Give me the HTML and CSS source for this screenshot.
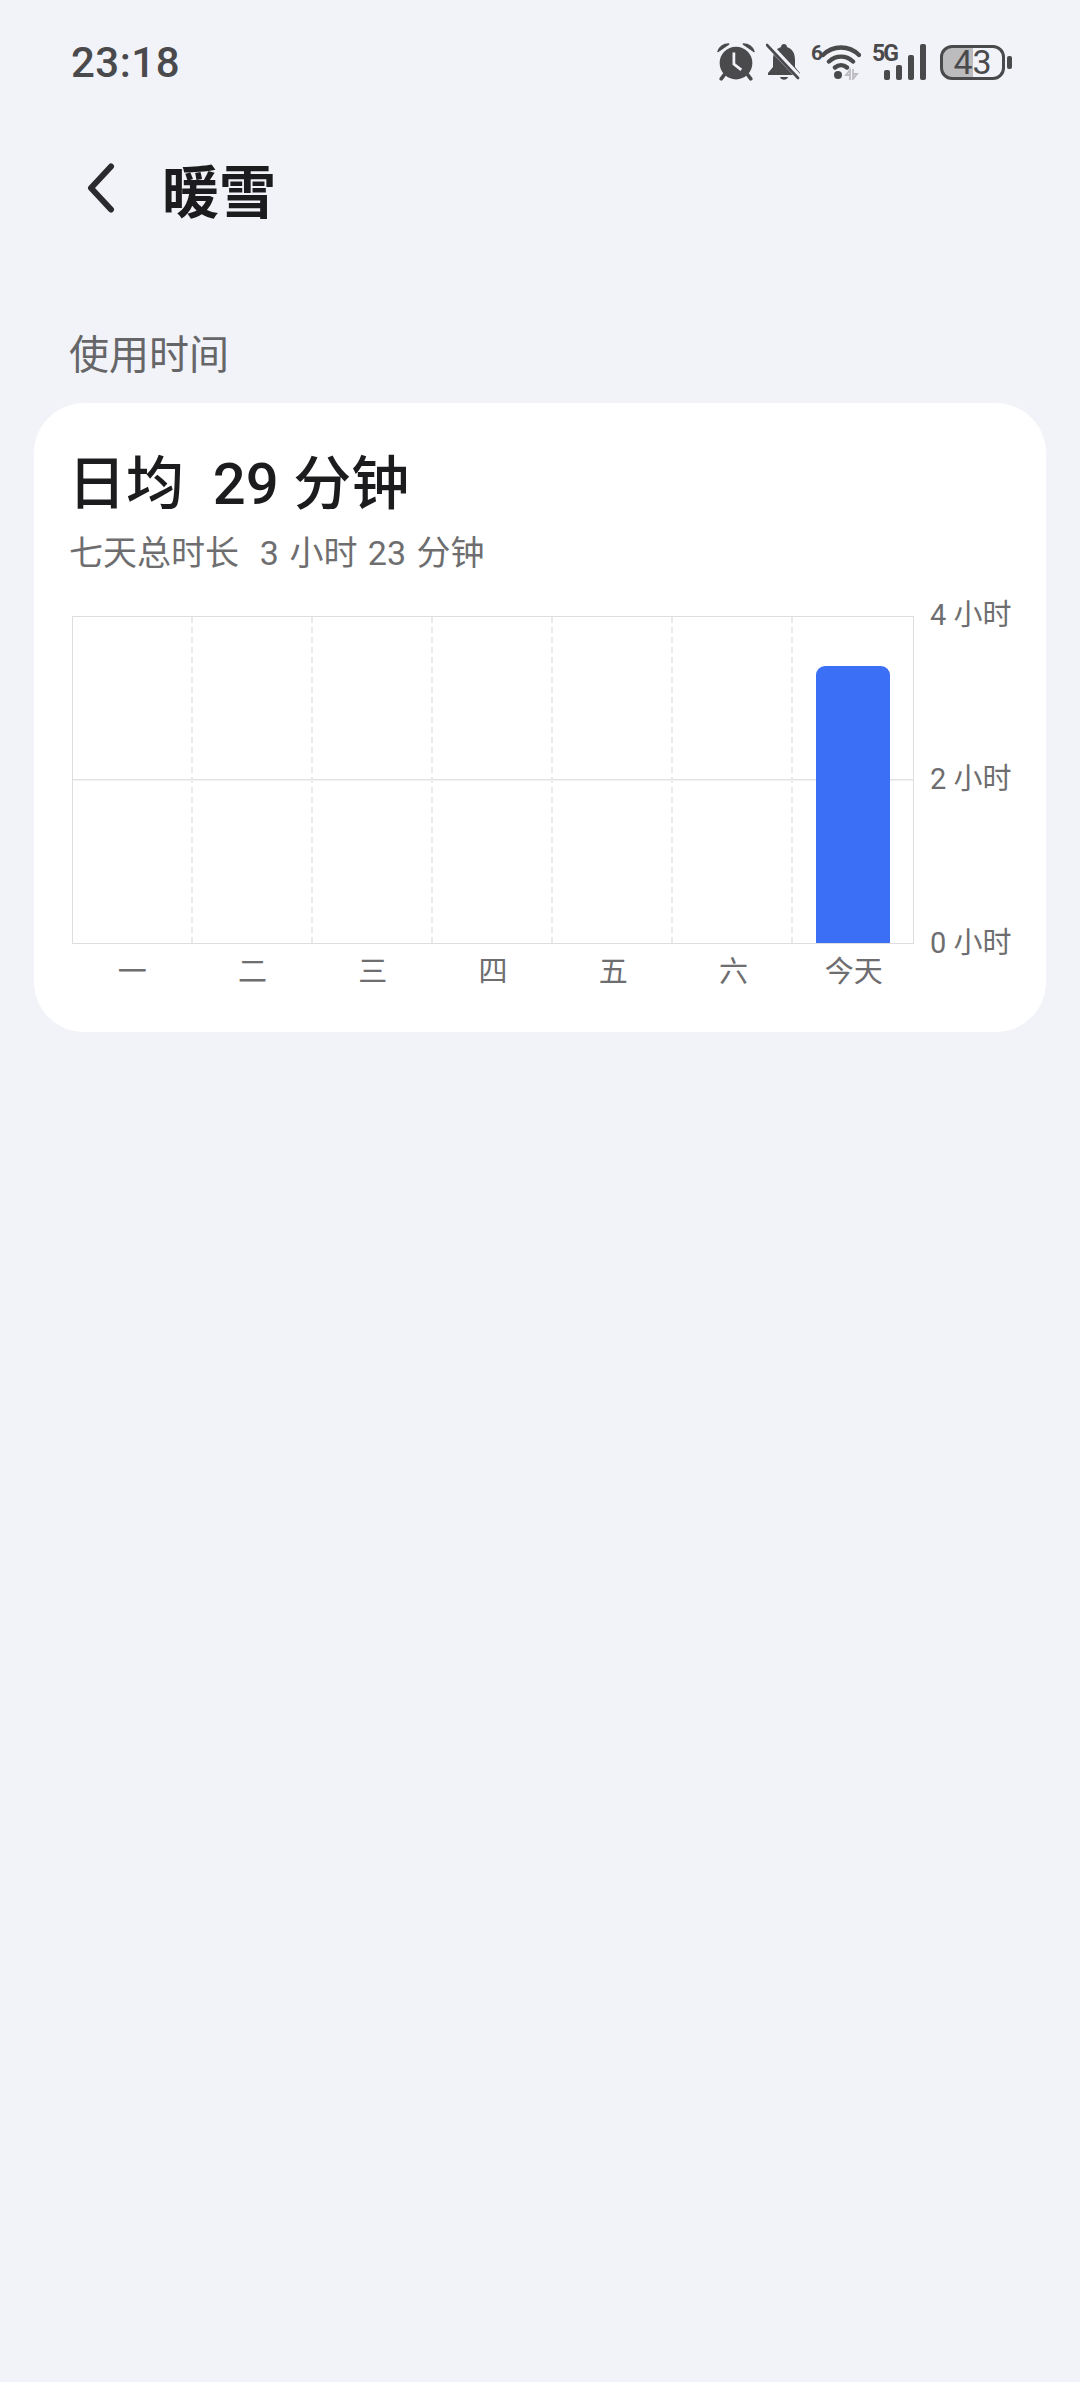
FILE: index.html
```html
<!DOCTYPE html>
<html lang="zh-CN">
<head>
    <meta charset="UTF-8">
    <meta name="viewport" content="width=device-width, initial-scale=1.0">
    <title>暖雪</title>
    <link rel="stylesheet" href="styles.css">
</head>
<body>
    <div class="status-bar">
        <span class="clock">23:18</span>
        <div class="status-icons">
            <svg class="icon-alarm" width="38" height="38" viewBox="0 0 36 36">
                <path d="M1 8 C3 3 7 1 11 1 Z M35 8 C33 3 29 1 25 1 Z" fill="#4a4a4c" stroke="#4a4a4c" stroke-width="1.500" stroke-linejoin="round"/>
                <path d="M7 30 L4 34 M29 30 L32 34" stroke="#4a4a4c" stroke-width="3.400" stroke-linecap="round"/>
                <circle cx="18" cy="19" r="15.500" fill="#4a4a4c"/>
                <path d="M16 9 V20 L23 25.500" fill="none" stroke="#f1f3f8" stroke-width="2.600"/>
            </svg>
            <svg class="icon-bell" width="36" height="38" viewBox="0 0 36 38">
                <path d="M15 4 C15 0 21 0 21 4 C27 6 29 11 29 17 V24 L34 30 V32 H2 V30 L7 24 V17 C7 11 9 6 15 4 Z" fill="#4a4a4c"/>
                <path d="M14 34 H22 C21 37.500 15 37.500 14 34 Z" fill="#4a4a4c"/>
                <path d="M2 1 L33 34" stroke="#f1f3f8" stroke-width="6"/>
                <path d="M1 2 L32 35" stroke="#4a4a4c" stroke-width="2.600" stroke-linecap="round"/>
            </svg>
            <div class="wifi">
                <span class="wifi-gen">6</span>
                <svg width="40" height="36" viewBox="0 0 40 36">
                    <path d="M2 11 C12 1 28 1 38 11 M8 17.500 C15 11 25 11 32 17.500 M14 23.500 C17.500 20.500 22.500 20.500 26 23.500" fill="none" stroke="#4a4a4c" stroke-width="4.400" stroke-linecap="round"/>
                    <circle cx="17" cy="31" r="4" fill="#4a4a4c"/>
                    <path d="M29 36 V26 L25 31 H29 M32 25 V35 L36 30 H32" fill="none" stroke="#bcbcc0" stroke-width="1.800"/>
                </svg>
            </div>
            <div class="signal">
                <span class="signal-gen">5G</span>
                <div class="bars">
                    <span class="bar-1"></span>
                    <span class="bar-2"></span>
                    <span class="bar-3"></span>
                    <span class="bar-4"></span>
                </div>
            </div>
            <div class="battery">
                <div class="battery-body">43</div>
                <span class="battery-nub"></span>
            </div>
        </div>
    </div>

    <div class="nav-bar">
        <svg class="back" width="28" height="50" viewBox="0 0 28 50">
            <path d="M24 3.500 L4 25 L24 46.500" fill="none" stroke="#2b2b2e" stroke-width="6" stroke-linecap="round" stroke-linejoin="round"/>
        </svg>
        <h1>暖雪</h1>
    </div>

    <h2 class="section-title">使用时间</h2>

    <div class="card">
        <div class="avg">日均&nbsp; 29 分钟</div>
        <div class="total">七天总时长&nbsp; 3 小时 23 分钟</div>

        <div class="chart">
            <div class="plot">
                <div class="col"></div>
                <div class="col"></div>
                <div class="col"></div>
                <div class="col"></div>
                <div class="col"></div>
                <div class="col"></div>
                <div class="col"><div class="bar"></div></div>
            </div>
            <div class="y-axis">
                <span>4 小时</span>
                <span>2 小时</span>
                <span>0 小时</span>
            </div>
            <div class="x-axis">
                <span>一</span>
                <span>二</span>
                <span>三</span>
                <span>四</span>
                <span>五</span>
                <span>六</span>
                <span>今天</span>
            </div>
        </div>
    </div>
</body>
</html>
```

FILE: styles.css
```css
* {
    box-sizing: border-box;
}
html, body {
    height: 100%;
}
body {
    margin: 0;
    background-color: #f1f3f8;
    font-family: Roboto, "Noto Sans CJK SC", sans-serif;
}

/* status bar */
.status-bar {
    display: flex;
    justify-content: space-between;
    align-items: center;
    height: 124px;
    padding: 0 68px 0 71px;
}
.clock {
    font-size: 42px;
    font-weight: 500;
    color: #4a4a4c;
    letter-spacing: 0.5px;
}
.status-icons {
    display: flex;
    align-items: center;
}
.icon-bell {
    margin-left: 11px;
}
.wifi {
    display: flex;
    align-items: flex-start;
    margin-left: 9px;
}
.wifi-gen {
    width: 10px;
    font-size: 21px;
    font-weight: 700;
    line-height: 18px;
    color: #4a4a4c;
}
.signal {
    display: flex;
    align-items: flex-start;
    height: 36px;
    margin-left: 11px;
}
.signal-gen {
    width: 21px;
    margin-right: -9px;
    font-size: 23px;
    font-weight: 700;
    line-height: 20px;
    letter-spacing: -2px;
    color: #4a4a4c;
}
.bars {
    display: flex;
    align-items: flex-end;
    gap: 6px;
    height: 36px;
}
.bars span {
    width: 6px;
    border-radius: 2px;
    background-color: #4a4a4c;
}
.bar-1 { height: 10px; }
.bar-2 { height: 15px; }
.bar-3 { height: 25px; }
.bar-4 { height: 36px; }
.battery {
    display: flex;
    align-items: center;
    margin-left: 14px;
}
.battery-body {
    width: 65px;
    height: 35px;
    border: 3.500px solid #4a4a4c;
    border-radius: 12px;
    background: linear-gradient(90deg, #bcbcbe 50%, transparent 50%);
    font-size: 34px;
    line-height: 28px;
    text-align: center;
    color: #4a4a4c;
}
.battery-nub {
    width: 5px;
    height: 13px;
    margin-left: 2px;
    border-radius: 2px;
    background-color: #4a4a4c;
}

/* title */
.nav-bar {
    display: flex;
    align-items: center;
    height: 86px;
    margin-top: 21px;
    padding-left: 87px;
}
.nav-bar h1 {
    margin: 0 0 0 47px;
    font-size: 57px;
    font-weight: 700;
    color: #1c1c1e;
}
.section-title {
    margin: 0;
    padding: 98px 0 0 69px;
    font-size: 40px;
    font-weight: 400;
    line-height: 54px;
    color: #666669;
}

/* card */
.card {
    height: 629px;
    margin: 20px 34px 0;
    padding: 47px 0 0 38px;
    border-radius: 50px;
    background-color: #fff;
}
.avg {
    margin-left: -4px;
    font-size: 58px;
    font-weight: 500;
    line-height: 68px;
    color: #1c1c1e;
}
.total {
    margin-top: 13px;
    margin-left: -3px;
    font-size: 34px;
    line-height: 44px;
    word-spacing: 2px;
    color: #6e6e70;
}

/* chart */
.chart {
    display: grid;
    grid-template-columns: 842px 1fr;
    margin-top: 41px;
}
.plot {
    display: grid;
    grid-template-columns: repeat(7, 1fr);
    height: 328px;
    border: 1.500px solid #dedee0;
    background: linear-gradient(#e2e2e4, #e2e2e4) 0 50% / 100% 1.500px no-repeat;
}
.col {
    display: flex;
    align-items: flex-end;
    justify-content: center;
    border-right: 2px dashed #ebebed;
}
.col:last-child {
    border-right: none;
}
.bar {
    width: 74px;
    height: 277px;
    border-radius: 9px 9px 0 0;
    background-color: #3b6ff5;
}
.y-axis {
    display: flex;
    flex-direction: column;
    justify-content: space-between;
    height: 328px;
    padding-left: 16px;
    font-size: 29px;
    color: #6e6e70;
}
.y-axis span {
    height: 0;
    line-height: 0;
    transform: translateY(-1px);
}
.x-axis {
    display: grid;
    grid-template-columns: repeat(7, 1fr);
    margin-top: 8px;
    font-size: 29px;
    line-height: 40px;
    text-align: center;
    color: #6e6e70;
}
```
